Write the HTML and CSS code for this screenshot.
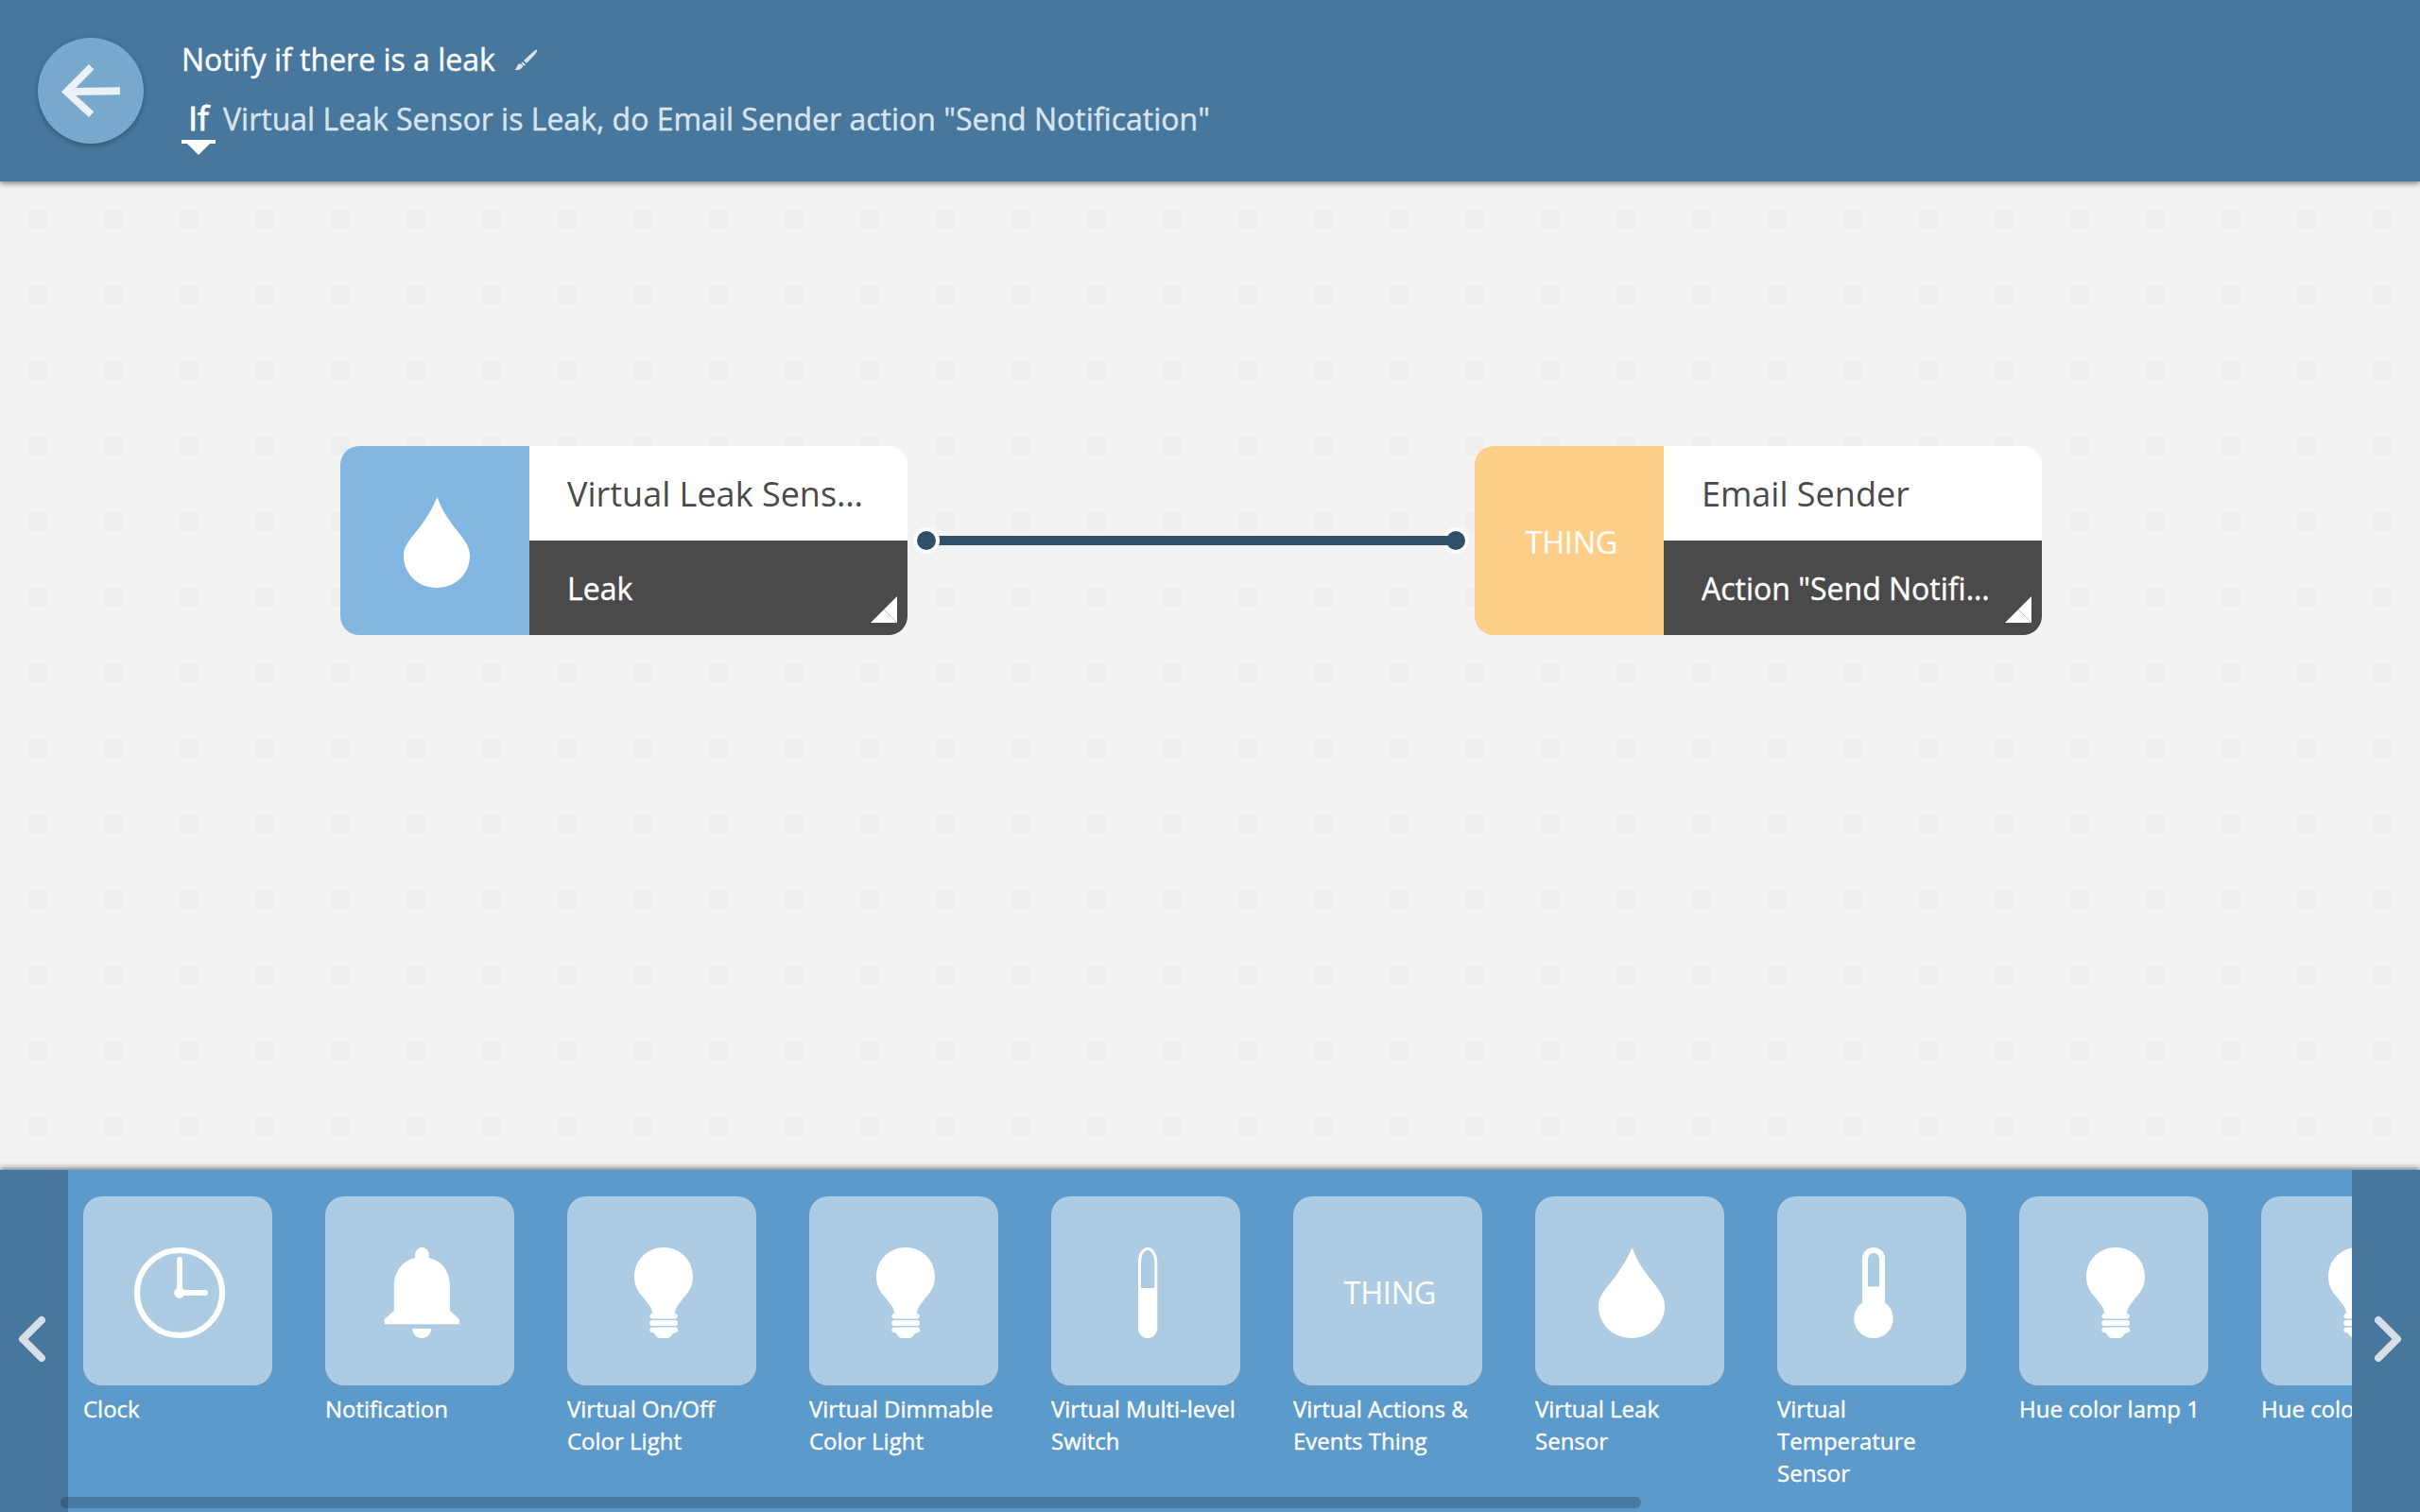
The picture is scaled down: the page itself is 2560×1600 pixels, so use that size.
FILE: index.html
```html
<!DOCTYPE html>
<html lang="en">
<head>
<meta charset="utf-8">
<title>Rule editor</title>
<link rel="stylesheet" href="styles.css">
</head>
<body>
<svg class="defs" aria-hidden="true">
  <symbol id="drop" viewBox="0 0 96 96"><path d="M48.500 0C52.500 11 57 18.500 63 27C73 41 83 49 83 62C83 82 67 96 48 96C29 96 13 82 13 62C13 49 24 41 33.500 27C39.500 18 44 11 48.500 0Z"/></symbol>
  <symbol id="bulb" viewBox="0 0 96 96"><path d="M48 0C65.500 0 79 13.500 79 31C79 43 73 49 67.500 55.500C63 61 60 65 60 70H60.500a2.800 2.800 0 0 1 0 5.500H35.500a2.800 2.800 0 0 1 0-5.500H36C36 65 33 61 28.500 55.500C23 49 17 43 17 31C17 13.500 30.500 0 48 0Z"/><rect x="33.300" y="77" width="29.500" height="6" rx="2.800"/><path d="M36 84.600H60.500a2.700 2.700 0 0 1 0 5.400C56 90.500 57 96 51 96H45C39 96 40 90.500 36 90a2.700 2.700 0 0 1 0-5.400Z"/></symbol>
  <symbol id="clock" viewBox="0 0 96 96"><circle cx="48" cy="48" r="45" fill="none" stroke="#fff" stroke-width="6"/><path d="M48 13V48H75" fill="none" stroke="#fff" stroke-width="5.800" stroke-linecap="round"/><circle cx="48" cy="48" r="5.800"/></symbol>
  <symbol id="bell" viewBox="0 0 96 96"><path d="M41 11V7.500a7.300 7.500 0 0 1 14.700 0V11C69 14 78 25 78 42V67L87.800 76V81.200H8.700V76L18.800 67V42C18.800 25 28 14 41 11ZM38.200 86H58.200C58 92 53.500 96 48.200 96C43 96 38.500 92 38.200 86Z"/></symbol>
  <symbol id="level" viewBox="0 0 96 96"><path fill-rule="evenodd" d="M38 16C38 7 42 0 48 0S58.300 7 58.300 16V85C58.300 91 54 96 48 96S38 91 38 85ZM41 17V43H55.300V17C55.300 9.500 52.500 3 48 3S41 9.500 41 17Z"/></symbol>
  <symbol id="thermometer" viewBox="0 0 96 96"><path fill-rule="evenodd" d="M36 12a12 12 0 0 1 24 0V58.500a20.700 20.700 0 1 1-24 0ZM42 12V41.500H54V12a6 6 0 0 0-12 0Z"/></symbol>
</svg>
<div class="editor">
  <header class="header">
    <button class="back" aria-label="Back"><svg width="112" height="112" viewBox="0 0 112 112"><path d="M56.700 30.700L30.400 57.200L56.700 81.200" fill="none" stroke-width="7.700"/><path d="M33 57L87 56.200" stroke-width="8"/></svg></button>
    <div class="summary">
      <h1 class="title">Notify if there is a leak<svg class="brush" width="24" height="24" viewBox="0 0 24 24"><path d="M24 0.500C24.500 2 23.500 3.500 22 5.500L13 15L10 12L20 3C21.500 1.500 23 0.500 24 0.500ZM8.800 13.500L12 16.500L10.500 18L7.500 15ZM6 15.500C8 15.500 9.500 17.500 8.800 19C7.500 21.500 4 22.500 0.500 22C3 20.500 2.500 16 6 15.500Z"/></svg></h1>
      <p class="rule"><span class="if">If</span><span class="sentence">Virtual Leak Sensor is Leak, do Email Sender action "Send Notification"</span></p>
    </div>
  </header>
  <main class="canvas">
    <svg class="grid" width="2560" height="1046"><defs><pattern id="dots" width="80" height="80" patternUnits="userSpaceOnUse"><rect x="30" y="30" width="20" height="20" rx="7"/></pattern></defs><path d="M0 0H2560V1046H0Z" fill="url(#dots)"/></svg>
    <svg class="wire" width="600" height="40" viewBox="0 0 600 40"><circle class="ring" cx="580" cy="20" r="14"/><path d="M20 20H580"/><circle class="ring" cx="20" cy="20" r="14"/><circle class="port" cx="20" cy="20" r="10"/><circle class="port" cx="580" cy="20" r="10"/></svg>
    <section class="block block-leak">
      <div class="block-icon"><svg class="icon"><use href="#drop"/></svg></div>
      <div class="block-body"><div class="block-name"><span>Virtual Leak Sensor</span></div><div class="block-value"><span>Leak</span><i class="corner"></i></div></div>
    </section>
    <section class="block block-email">
      <div class="block-icon"><svg class="icon" viewBox="0 0 96 96"><text class="thing-text" x="-0.500" y="60" textLength="98">THING</text></svg></div>
      <div class="block-body"><div class="block-name"><span>Email Sender</span></div><div class="block-value"><span>Action "Send Notification"</span><i class="corner"></i></div></div>
    </section>
  </main>
  <footer class="palette">
    <button class="scroll" aria-label="Previous"><svg width="72" height="60" viewBox="0 0 72 60"><path d="M44 10L24 30L44 50"/></svg></button>
    <div class="devices">
      <div class="device"><div class="tile"><svg class="icon"><use href="#clock"/></svg></div><p>Clock</p></div>
      <div class="device"><div class="tile"><svg class="icon"><use href="#bell"/></svg></div><p>Notification</p></div>
      <div class="device"><div class="tile"><svg class="icon"><use href="#bulb"/></svg></div><p>Virtual On/Off Color Light</p></div>
      <div class="device"><div class="tile"><svg class="icon"><use href="#bulb"/></svg></div><p>Virtual Dimmable Color Light</p></div>
      <div class="device"><div class="tile"><svg class="icon"><use href="#level"/></svg></div><p>Virtual Multi-level Switch</p></div>
      <div class="device"><div class="tile"><svg class="icon" viewBox="0 0 96 96"><text class="thing-text" x="-0.500" y="60" textLength="98">THING</text></svg></div><p>Virtual Actions &amp; Events Thing</p></div>
      <div class="device"><div class="tile"><svg class="icon"><use href="#drop"/></svg></div><p>Virtual Leak Sensor</p></div>
      <div class="device"><div class="tile"><svg class="icon"><use href="#thermometer"/></svg></div><p>Virtual Temperature Sensor</p></div>
      <div class="device"><div class="tile"><svg class="icon"><use href="#bulb"/></svg></div><p>Hue color lamp 1</p></div>
      <div class="device"><div class="tile"><svg class="icon"><use href="#bulb"/></svg></div><p>Hue color lamp 2</p></div>
    </div>
    <button class="scroll" aria-label="Next"><svg width="72" height="60" viewBox="0 0 72 60"><path d="M28 10L48 30L28 50"/></svg></button>
    <div class="scrollbar"></div>
  </footer>
</div>
</body>
</html>
```
FILE: styles.css
```css
* { box-sizing: border-box; }
body, h1, p { margin: 0; }
body { font-family: "Open Sans", sans-serif; overflow: hidden; }
button { border: 0; padding: 0; font: inherit; }
svg { display: block; flex: none; }
.defs { position: absolute; width: 0; height: 0; }
.editor { display: flex; flex-direction: column; height: 1600px; background: #f3f3f3; }

.header { display: flex; align-items: center; gap: 40px; height: 192px; padding-left: 40px; background: #48779e; box-shadow: 0 2px 6px rgba(0, 0, 0, .5); position: relative; z-index: 1; }
.back { width: 112px; height: 112px; border-radius: 50%; background: #78a9cd; box-shadow: 0 2px 6px rgba(0, 0, 0, .3); }
.back path { stroke: #ecf1f6; }
.summary { align-self: flex-start; padding-top: 39px; color: #fff; -webkit-text-stroke: .4px; }
.title { display: flex; align-items: flex-start; gap: 20px; font-size: 32px; line-height: 48px; font-weight: 400; white-space: nowrap; }
.brush { margin-top: 13px; fill: #dae4ec; }
.rule { display: flex; margin-top: 15px; font-size: 32px; line-height: 48px; white-space: nowrap; }
.if { position: relative; width: 36px; height: 50px; margin-right: 8px; border-bottom: 4px solid #fff; font-size: 35px; line-height: 46px; text-align: center; -webkit-text-stroke: 1px; }
.if::after { content: ""; position: absolute; top: 50px; left: 6px; border: 12px solid transparent; border-top-color: #fff; border-bottom: 0; }
.sentence { color: #dae4ec; }

.canvas { flex: 1; position: relative; }
.grid { fill: #eee; }
.block { position: absolute; top: 280px; display: flex; width: 600px; height: 200px; border-radius: 20px; overflow: hidden; }
.block-leak { left: 360px; }
.block-email { left: 1560px; }
.block-icon, .tile { display: flex; flex: none; width: 200px; height: 200px; padding: 54px 0 0 54px; }
.icon { width: 96px; height: 96px; fill: #fff; overflow: visible; }
.thing-text { font-size: 32.500px; font-weight: 400; }
.block-leak .block-icon { background: #82b7e1; }
.block-email .block-icon { background: #ffcf89; }
.block-body { width: 400px; }
.block-name, .block-value { position: relative; height: 100px; padding: 0 40px; background: #fff; color: #4a4a4a; font-size: 36px; line-height: 102px; }
.block-value { padding-right: 52px; background: #4a4a4a; color: #fff; font-size: 32px; line-height: 101px; -webkit-text-stroke: .4px; }
.block span { display: block; overflow: hidden; white-space: nowrap; text-overflow: ellipsis; }
.corner { position: absolute; right: 11px; bottom: 13px; width: 28px; height: 28px; background: linear-gradient(45deg, transparent calc(50% - .5px), #bbb 50%, transparent calc(50% + .5px)), #fff; clip-path: polygon(100% 0, 100% 100%, 0 100%); }
.wire { position: absolute; left: 960px; top: 360px; }
.wire path { stroke: #305069; stroke-width: 10; }
.ring { fill: #fff; }
.port { fill: #305069; }

.palette { position: relative; display: flex; height: 362px; background: #5b9aca; box-shadow: 0 -2px 6px rgba(0, 0, 0, .5); }
.scroll { display: flex; flex: none; align-items: center; width: 72px; background: #48779e; }
.scroll svg { margin-top: -4px; }
.scroll path { fill: none; stroke: #d6dee8; stroke-width: 8; stroke-linecap: round; stroke-linejoin: round; }
.devices { display: flex; flex: 1; gap: 56px; min-width: 0; overflow: hidden; padding: 28px 0 0 16px; }
.device { flex: none; width: 200px; color: #fff; font-size: 24px; line-height: 34px; }
.device p { -webkit-text-stroke: .4px; }
.tile { margin-bottom: 8px; border-radius: 20px; background: #adcce4; }
.scrollbar { position: absolute; left: 64px; bottom: 4px; width: 1672px; height: 12px; border-radius: 6px; background: rgba(0, 0, 0, .2); }
```
